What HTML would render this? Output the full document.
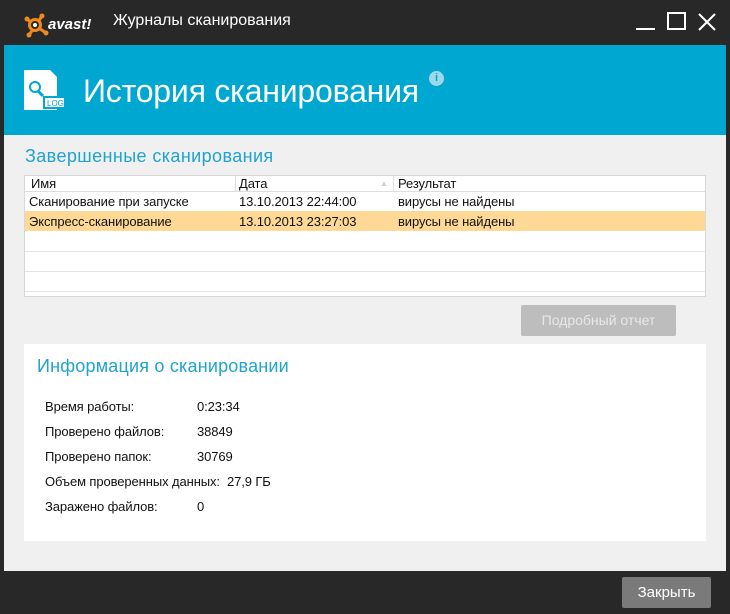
<!DOCTYPE html>
<html><head><meta charset="utf-8"><style>
*{margin:0;padding:0;box-sizing:border-box}
body{width:730px;height:614px;background:#282828;font-family:"Liberation Sans","DejaVu Sans",sans-serif;position:relative;overflow:hidden}
.a{position:absolute;white-space:nowrap}
.t{font-size:13px;color:#111;letter-spacing:-0.1px}
</style></head><body>
<svg class="a" style="left:22px;top:10px" width="82" height="28" viewBox="0 0 82 28">
<g fill="#f08a1c"><circle cx="13" cy="15" r="7"/><circle cx="5" cy="9" r="2.5"/><circle cx="7" cy="25" r="2.5"/><circle cx="20" cy="6" r="2.5"/><circle cx="24" cy="23" r="2.5"/><path d="M5 9L11 14M7 25l5-7M20 6l-4 6M24 23l-7-5" stroke="#f08a1c" stroke-width="3"/></g>
<circle cx="13" cy="15" r="4" fill="#282828"/><circle cx="13" cy="15" r="2" fill="#fff"/>
<text x="26" y="19" fill="#fff" font-family="Liberation Sans" font-weight="bold" font-size="15" font-style="italic">avast!</text>
</svg>
<div class="a" style="left:113px;top:12px;font-size:16px;color:#fff">Журналы сканирования</div>
<div class="a" style="left:636px;top:28px;width:19px;height:2px;background:#fff"></div>
<div class="a" style="left:667px;top:12px;width:19px;height:18px;border:2px solid #fff"></div>
<svg class="a" style="left:697px;top:12px" width="20" height="20"><path d="M2 2L18 18M18 2L2 18" stroke="#fff" stroke-width="2"/></svg>
<div class="a" style="left:4px;top:45px;width:722px;height:526px;background:#f0f0f0"></div>
<div class="a" style="left:4px;top:45px;width:722px;height:90px;background:#00a7d1"></div>
<svg class="a" style="left:24px;top:70px" width="42" height="42"><path d="M0 0H26L33 7V40H0Z" fill="#fff"/><circle cx="11" cy="17" r="5" fill="none" stroke="#00a7d1" stroke-width="2"/><path d="M14 21L19 26" stroke="#00a7d1" stroke-width="3"/><rect x="19" y="26" width="23" height="13" fill="#00a7d1"/><rect x="21" y="28" width="19" height="9" fill="#fff"/><text x="23" y="36" font-size="8" fill="#00a7d1" font-family="Liberation Sans">LOG</text></svg>
<div class="a" style="left:83px;top:73px;font-size:32px;color:#fff;letter-spacing:-0.2px">История сканирования</div>
<div class="a" style="left:429px;top:71px;width:15px;height:15px;border-radius:50%;background:#9fd8ea;color:#00a7d1;font-size:11px;font-weight:bold;text-align:center;line-height:15px">i</div>
<div class="a" style="left:25px;top:146px;font-size:18px;color:#1fa3cf;letter-spacing:0.4px">Завершенные сканирования</div>
<div class="a" style="left:24px;top:175px;width:682px;height:122px;background:#fff;border:1px solid #d8d8d8">
<div style="position:absolute;left:0;top:0;width:680px;height:16px;border-bottom:1px solid #ddd"></div>
<div style="position:absolute;left:210px;top:0;width:1px;height:16px;background:#ddd"></div>
<div style="position:absolute;left:368px;top:0;width:1px;height:16px;background:#ddd"></div>
<div style="position:absolute;left:0;top:35px;width:680px;height:20px;background:#fed995"></div>
<div style="position:absolute;left:0;top:75px;width:680px;height:1px;background:#e4e4e4"></div>
<div style="position:absolute;left:0;top:95px;width:680px;height:1px;background:#e4e4e4"></div>
<div style="position:absolute;left:0;top:115px;width:680px;height:1px;background:#e4e4e4"></div>
</div>
<div class="a t" style="left:31px;top:176px">Имя</div>
<div class="a t" style="left:239px;top:176px">Дата</div>
<div class="a t" style="left:398px;top:176px">Результат</div>
<div class="a" style="left:380px;top:179px;color:#ccc;font-size:8px">▲</div>
<div class="a t" style="left:29px;top:194px">Сканирование при запуске</div>
<div class="a t" style="left:239px;top:194px">13.10.2013 22:44:00</div>
<div class="a t" style="left:398px;top:194px">вирусы не найдены</div>
<div class="a t" style="left:29px;top:214px">Экспресс-сканирование</div>
<div class="a t" style="left:239px;top:214px">13.10.2013 23:27:03</div>
<div class="a t" style="left:398px;top:214px">вирусы не найдены</div>
<div class="a" style="left:521px;top:305px;width:155px;height:31px;background:#bdbdbd;border-radius:2px;color:#e8e8e8;font-size:14px;text-align:center;line-height:31px">Подробный отчет</div>
<div class="a" style="left:24px;top:344px;width:682px;height:197px;background:#fff"></div>
<div class="a" style="left:37px;top:356px;font-size:18px;color:#1fa3cf;letter-spacing:0.2px">Информация о сканировании</div>
<div class="a t" style="left:45px;top:399px">Время работы:</div><div class="a t" style="left:197px;top:399px">0:23:34</div>
<div class="a t" style="left:45px;top:424px">Проверено файлов:</div><div class="a t" style="left:197px;top:424px">38849</div>
<div class="a t" style="left:45px;top:449px">Проверено папок:</div><div class="a t" style="left:197px;top:449px">30769</div>
<div class="a t" style="left:45px;top:474px">Объем проверенных данных:&nbsp; 27,9 ГБ</div>
<div class="a t" style="left:45px;top:499px">Заражено файлов:</div><div class="a t" style="left:197px;top:499px">0</div>
<div class="a" style="left:622px;top:577px;width:89px;height:31px;background:#7a7a7a;border-radius:2px;color:#fff;font-size:15px;text-align:center;line-height:31px">Закрыть</div>
</body></html>
